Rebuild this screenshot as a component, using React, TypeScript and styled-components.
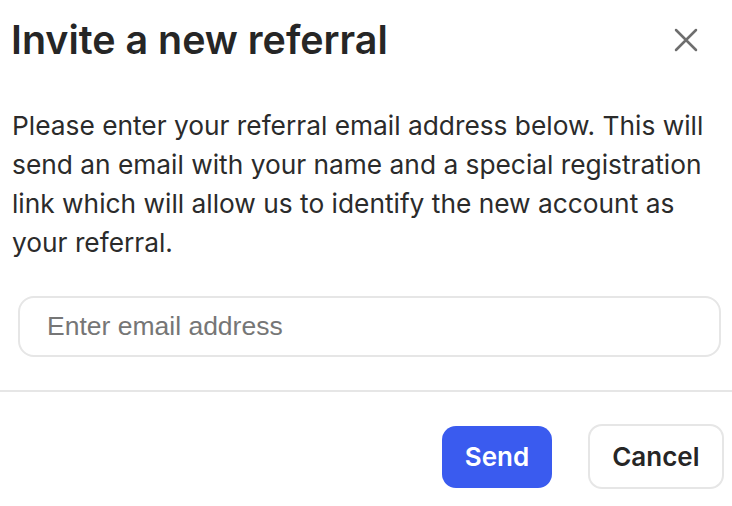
import React from "react";
import styled, { createGlobalStyle } from "styled-components";

const Global = createGlobalStyle`
  html, body { margin: 0; padding: 0; background: #ffffff; }
  body { font-family: Inter, "Noto Sans", sans-serif; color: #262626; }
  * { box-sizing: border-box; }
`;

const Dialog = styled.div`
  width: 732px;
  height: 506px;
  display: flex;
  flex-direction: column;
  background: #fff;
  overflow: hidden;
`;

const Header = styled.div`
  display: flex;
  align-items: center;
  justify-content: space-between;
  padding: 0 34px 0 11px;
  height: 80px;
`;

const Title = styled.h1`
  margin: 0;
  font-size: 39.4px;
  font-weight: 600;
  color: #262626;
  letter-spacing: 0;
`;

const CloseButton = styled.button`
  border: none;
  background: transparent;
  padding: 0;
  width: 24px;
  height: 24px;
  display: flex;
  align-items: center;
  justify-content: center;
  color: #6e6e6e;
  cursor: pointer;
`;

const Body = styled.div`
  padding: 26px 12px 0 12px;
  display: flex;
  flex-direction: column;
`;

const Description = styled.p`
  margin: 0;
  max-width: 700px;
  font-size: 26.3px;
  line-height: 39px;
  color: #2b2b2b;
`;

const EmailInput = styled.input`
  margin: 34px 0 0 6px;
  height: 61px;
  width: 703px;
  border: 2px solid #e6e6e6;
  border-radius: 16px;
  padding: 0 27px;
  font-family: "Liberation Sans", Arial, sans-serif;
  font-size: 26.5px;
  color: #262626;
  outline: none;
  &::placeholder { color: #767676; }
`;

const Divider = styled.hr`
  margin: 33px 0 0 0;
  border: none;
  border-top: 2px solid #e6e6e6;
  width: 100%;
`;

const Footer = styled.div`
  display: flex;
  justify-content: flex-end;
  align-items: center;
  gap: 36px;
  padding: 32px 8px 0 0;
`;

const Button = styled.button<{ $primary?: boolean }>`
  font-family: Inter, sans-serif;
  font-size: 26px;
  font-weight: 600;
  border-radius: 14px;
  height: ${(p) => (p.$primary ? "62px" : "65px")};
  padding: 0 ${(p) => (p.$primary ? "22.5px" : "22.5px")};
  border: ${(p) => (p.$primary ? "none" : "2px solid #e6e6e6")};
  background: ${(p) => (p.$primary ? "#3a5bef" : "#ffffff")};
  color: ${(p) => (p.$primary ? "#ffffff" : "#262626")};
  cursor: pointer;
`;

export default function App() {
  return (
    <>
      <Global />
      <Dialog>
        <Header>
          <Title>Invite a new referral</Title>
          <CloseButton aria-label="Close">
            <svg width="24" height="24" viewBox="0 0 24 24" fill="none" stroke="currentColor" strokeWidth="2.5" strokeLinecap="round">
              <path d="M2 2L22 22M22 2L2 22" />
            </svg>
          </CloseButton>
        </Header>
        <Body>
          <Description>
            Please enter your referral email address below. This will send an email with your name and a special registration link which will allow us to identify the new account as your referral.
          </Description>
          <EmailInput type="email" placeholder="Enter email address" />
        </Body>
        <Divider />
        <Footer>
          <Button $primary>Send</Button>
          <Button>Cancel</Button>
        </Footer>
      </Dialog>
    </>
  );
}
